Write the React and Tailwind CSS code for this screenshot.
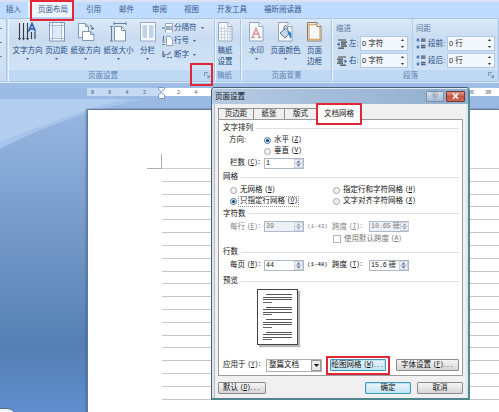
import React from 'react';

const menuTabs = [
  { label: '插入', cls: 'w-[28px] pl-[6px]' },
  { label: '页面布局', cls: 'w-[46px] pl-[10px]', active: true },
  { label: '引用', cls: 'w-[33px] pl-[12px]' },
  { label: '邮件', cls: 'w-[33px] pl-[12px]' },
  { label: '审阅', cls: 'w-[32px] pl-[12px]' },
  { label: '视图', cls: 'w-[33px] pl-[12px]' },
  { label: '开发工具', cls: 'w-[47px] pl-[12px]' },
  { label: '福昕阅读器', cls: 'w-[60px] pl-[12px]' },
];

/* ---------- Icons ---------- */

function TextDirectionIcon() {
  return (
    <svg width="19" height="20" viewBox="0 0 19 20" fill="none">
      <path d="M1.5 1v16M5.5 1v16M9.5 1v16M13.5 10v7M17 10v7" stroke="#3b3b3b" strokeWidth="1.1" />
      <path d="M0 16l1.5 2.5L3 16M4 16l1.5 2.5L7 16M8 16l1.5 2.5L11 16" fill="#3b3b3b" />
      <path d="M10.5 9.5L14 1.5l3.5 8M11.8 6.8h4.5" stroke="#2c62ad" strokeWidth="1.7" />
    </svg>
  );
}

function MarginsIcon() {
  return (
    <svg width="16" height="20" viewBox="0 0 16 20" fill="none">
      <rect x=".5" y=".5" width="15" height="18.5" fill="#f4f8fc" stroke="#7f96b5" />
      <path d="M3.5 1v18M12.5 1v18M1 3.5h14M1 16.5h14" stroke="#a9bcd4" />
      <rect x="4" y="4" width="8" height="12" fill="#dde9f6" />
    </svg>
  );
}

function OrientationIcon() {
  return (
    <svg width="18" height="20" viewBox="0 0 18 20" fill="none">
      <path d="M1.5 1.5h7l3 3v11h-10z" fill="#f1f6fb" stroke="#8398b4" />
      <path d="M5.5 9.5h8l3.5 3v6H5.5z" fill="#fbfdff" stroke="#8398b4" />
      <path d="M8.5 1.5v3h3M13.5 9.5v3h3.5" stroke="#8398b4" />
      <path d="M13 3.5c2 .3 2.5 1.5 2.4 3.5M13.8 6l1.6 1.5L17 6" stroke="#51647e" />
    </svg>
  );
}

function SizeIcon() {
  return (
    <svg width="17" height="20" viewBox="0 0 17 20" fill="none">
      <path d="M4.5 4.5h7l4 4v10.5h-11z" fill="#f8fbfe" stroke="#7f93ad" />
      <path d="M11.5 4.5v4h4" stroke="#7f93ad" />
      <path d="M4 1.5h12M1.5 4v15M4 0v3M16 0v3M0 4.5h3M0 19h3" stroke="#5e738e" strokeWidth=".9" />
    </svg>
  );
}

function ColumnsIcon() {
  return (
    <svg width="16" height="20" viewBox="0 0 16 20" fill="none">
      <rect x=".5" y=".5" width="15" height="18.5" fill="#f7fafd" stroke="#98abc5" />
      <rect x="2.5" y="3" width="4.5" height="13" fill="#c2d3e8" />
      <rect x="9" y="3" width="4.5" height="13" fill="#c2d3e8" />
    </svg>
  );
}

function SheetIcon({ stroke = '#93a5bd', children }) {
  return (
    <svg width="15" height="20" viewBox="0 0 15 20" fill="none">
      <path d="M.5.5H10l4 4V19H.5z" fill="#f5f9fd" stroke={stroke} />
      {children}
      <path d="M10 .5v4h4" fill="#fff" stroke={stroke} />
    </svg>
  );
}

function ManuscriptIcon() {
  return (
    <SheetIcon>
      <path d="M3.5 4v15M6.5 4v15M9.5 4v15M12 5v14M1 6.5h13M1 9.5h13M1 12.5h13M1 15.5h13" stroke="#c4ced9" strokeWidth=".8" />
    </SheetIcon>
  );
}

function WatermarkIcon() {
  return (
    <SheetIcon>
      <path d="M3.5 15L7 6.5l3.8 8.5M5 12h5" stroke="#d99a94" strokeWidth="1.5" />
      <path d="M2 15.5h4M9 15.5h3.5" stroke="#cf8f8a" />
    </SheetIcon>
  );
}

function PageColorIcon() {
  return (
    <SheetIcon>
      <path d="M2 11l6-5 4 5-5 5z" fill="#c8d8e8" stroke="#536b87" strokeWidth=".9" />
      <path d="M6 8c-1-5 3-6 4-1" stroke="#4c5f78" />
      <path d="M9 9.5c4-1 5 2 4 7-2-1-1.500-4-4-7z" fill="#2f7cc8" />
    </SheetIcon>
  );
}

function PageBorderIcon() {
  return (
    <SheetIcon stroke="#8b7b68">
      <path d="M2 2.500h8l3 3v12H2z" stroke="#dda96b" strokeWidth="1.3" />
    </SheetIcon>
  );
}

function BreakIcon() {
  return (
    <svg width="11" height="10" viewBox="0 0 11 10" fill="none">
      <path d="M3.5.5h7v3h-7zM3.500 9.500v-3h7v3" fill="#f8fbff" stroke="#8092aa" strokeWidth=".8" />
      <path d="M0 5h3M4 5h1.5M6.5 5H8M9 5h1.5" stroke="#4d627c" />
    </svg>
  );
}

function LineNumberIcon() {
  return (
    <svg width="11" height="10" viewBox="0 0 11 10" fill="none">
      <path d="M4.5.5H8L10.5 3v6.500h-6z" fill="#f8fbff" stroke="#8092aa" strokeWidth=".8" />
      <path d="M1.5 0v3M.5 4h2M.5 6h2M.5 8.5h2" stroke="#4d627c" />
    </svg>
  );
}

function HyphenIcon() {
  return (
    <svg width="11" height="10" viewBox="0 0 11 10" fill="none">
      <path d="M1 1v6M1 4.5c3-1.5 3 2.5 0 2.5M9 3c-2-1.5-3 .5-1.5 1.5M5 7.5h2" stroke="#4d5c70" />
      <path d="M4.5 4.5h2M8 7.5h2" stroke="#326bb1" />
    </svg>
  );
}

function IndentIcon({ flip }) {
  return (
    <svg width="10" height="10" viewBox="0 0 10 10" fill="none" className={flip ? '-scale-x-100' : ''}>
      <path d="M1 1h8M4 3.2h6M4 5.2h5M4 7.2h6M1 9.2h6" stroke="#444" strokeWidth="1.2" />
      <path d="M0 5.2l2.5-2v4z" fill="#2d5da5" />
    </svg>
  );
}

function SpacingIcon() {
  return (
    <svg width="10" height="11" viewBox="0 0 10 11" fill="none">
      <path d="M5 1.2h4.5M5 3h4.5M5 7.5h4.5M5 9.5h4.5" stroke="#555f6d" strokeWidth="1.3" />
      <path d="M2 1v3M2 7v3" stroke="#3d6fb5" />
      <path d="M0 2.5L2 0l2 2.5zM0 8.5L2 11l2-2.5z" fill="#3d6fb5" />
    </svg>
  );
}

function Launcher() {
  return (
    <svg width="6" height="6" viewBox="0 0 6 6" fill="none">
      <path d="M.5 4V.5H4M2.5 2.5l2.5 2.5M5.5 3v2.5H3" stroke="#6683ab" strokeWidth=".8" />
    </svg>
  );
}

function Caret() {
  return (
    <svg width="3" height="2" viewBox="0 0 3 2">
      <path d="M0 0h3L1.5 2z" fill="#44618f" />
    </svg>
  );
}

/* ---------- Ribbon ---------- */

function BigButton({ icon, label, second, width }) {
  return (
    <div className={`flex flex-col items-center ${width}`}>
      <div className="h-[21px] flex items-start">{icon}</div>
      <span className="h-[11px] leading-[11px] mt-[2px] whitespace-nowrap">{label}</span>
      {second ? <span className="h-[11px] leading-[11px]">{second}</span> : <span className="pt-[2px]"><Caret /></span>}
    </div>
  );
}

function SmallButton({ icon, label }) {
  return (
    <div className="flex items-center h-[13.5px]">
      {icon}
      <span className="ml-px mr-[4px]">{label}</span>
      <Caret />
    </div>
  );
}

function Group({ title, width, titleClass = '', launcher, children }) {
  return (
    <div className={`flex flex-col shrink-0 h-[64px] rounded-[2px] border border-[#a9c5e6] border-l-[#edf5fd] bg-linear-to-b from-[#dce9f7] from-0% via-[#c9dcf0] via-30% to-[#d3e6f9] overflow-hidden ${width}`}>
      <div className="flex h-[51px] text-[#244a85]">{children}</div>
      <div className="relative flex-1 bg-[#bfd8f3] text-[#5e80b2] flex items-center justify-center">
        <span className={titleClass}>{title}</span>
        {launcher && <span className="absolute right-[4px] top-[2px]"><Launcher /></span>}
      </div>
    </div>
  );
}

function RibbonField({ icon, label, value, labelWidth }) {
  return (
    <div className="flex items-center h-[17px]">
      {icon}
      <span className={`pl-[2px] whitespace-nowrap ${labelWidth}`}>{label}</span>
      <div className="flex items-center justify-between w-[48px] h-[15px] border border-[#b3cae6] bg-[#f3f8fd] text-[#222] pl-px pr-[3px]">
        <span>{value}</span>
        <svg width="3" height="9" viewBox="0 0 3 9">
          <path d="M0 2L1.5 0 3 2zM0 7l1.5 2L3 7z" fill="#333" />
        </svg>
      </div>
    </div>
  );
}

function Ribbon() {
  return (
    <div className="flex h-[66px] shrink-0 pt-px bg-[#c5dbf5] border-b border-[#d5edfb]">
      <div className="w-[7px] h-[64px] shrink-0 rounded-r-[2px] border border-l-0 border-[#a9c5e6] bg-linear-to-b from-[#dce9f7] to-[#c9dcf0] flex flex-col pt-[9px] gap-[13px]">
        <span className="w-[2px] h-px bg-[#66809f]" />
        <span className="w-[2px] h-px bg-[#66809f]" />
        <span className="w-[2px] h-px bg-[#66809f]" />
      </div>
      <Group title="页面设置" width="w-[207px] ml-px" titleClass="-ml-[17px]" launcher>
        <div className="flex pt-[3px] pl-[2px]">
          <BigButton icon={<TextDirectionIcon />} label="文字方向" width="w-[33px]" />
          <BigButton icon={<MarginsIcon />} label="页边距" width="w-[25px]" />
          <BigButton icon={<OrientationIcon />} label="纸张方向" width="w-[33px]" />
          <BigButton icon={<SizeIcon />} label="纸张大小" width="w-[33px]" />
          <BigButton icon={<ColumnsIcon />} label="分栏" width="w-[25px]" />
        </div>
        <div className="flex flex-col pt-[2px] pl-[2px]">
          <SmallButton icon={<BreakIcon />} label="分隔符" />
          <SmallButton icon={<LineNumberIcon />} label="行号" />
          <SmallButton icon={<HyphenIcon />} label="断字" />
        </div>
      </Group>
      <Group title="稿纸" width="w-[26px]" titleClass="-ml-[7px]">
        <div className="pt-[3px]">
          <BigButton icon={<ManuscriptIcon />} label="稿纸" second="设置" width="w-[18px]" />
        </div>
      </Group>
      <Group title="页面背景" width="w-[91px]">
        <div className="flex pt-[3px] pl-[4px]">
          <BigButton icon={<WatermarkIcon />} label="水印" width="w-[21px]" />
          <BigButton icon={<PageColorIcon />} label="页面颜色" width="w-[37px]" />
          <BigButton icon={<PageBorderIcon />} label="页面" second="边框" width="w-[21px]" />
        </div>
      </Group>
      <Group title="段落" width="w-[167px]" titleClass="-ml-[10px]" launcher>
        <div className="flex flex-col w-[79px] pl-[3px] pt-[4px]">
          <span className="h-[12px] leading-[11px] text-[#56749f]">缩进</span>
          <div className="flex flex-col pl-px">
            <RibbonField icon={<IndentIcon />} label="左:" value="0 字符" labelWidth="w-[13px]" />
            <RibbonField icon={<IndentIcon flip />} label="右:" value="0 字符" labelWidth="w-[13px]" />
          </div>
        </div>
        <div className="flex flex-col pl-[3px] pt-[4px] border-l border-[#b4cde9]">
          <span className="h-[12px] leading-[11px] text-[#56749f]">间距</span>
          <div className="flex flex-col">
            <RibbonField icon={<SpacingIcon />} label="段前:" value="0 行" labelWidth="w-[21px]" />
            <RibbonField icon={<SpacingIcon />} label="段后:" value="0 行" labelWidth="w-[21px]" />
          </div>
        </div>
      </Group>
    </div>
  );
}

/* ---------- Document ---------- */

function Ruler() {
  return (
    <div className="flex h-[8px] ml-[87px] text-[5.5px] leading-[8px] text-[#4d5b70]">
      <div className="flex w-[74px] bg-[#c5daf4]">
        {[8, 6, 4, 2].map((n) => (
          <span key={n} className="w-[17.3px] pl-[4px]">{n}</span>
        ))}
      </div>
      <div className="flex flex-1 justify-between bg-white pl-[9px] overflow-hidden">
        <div className="flex">
          <span className="w-[17.3px] pl-[7px]">2</span>
          <span className="w-[17.3px] pl-[7px]">4</span>
        </div>
        <div className="flex">
          <span className="w-[17.3px]">36</span>
          <span className="w-[14px]">38</span>
        </div>
      </div>
    </div>
  );
}

function Document() {
  return (
    <div className="relative flex-1 overflow-hidden bg-linear-to-b from-[#9fbde6] from-0% via-[#557fb3] via-80% to-[#608ecd]">
      <svg className="absolute left-0 top-[16px]" width="150" height="50" viewBox="0 0 150 50">
        <path d="M0 0h146C90 10 40 29 0 50z" fill="#a6c3e9" />
        <path d="M0 0h125C75 13 35 29 0 43z" fill="#b3cdee" />
      </svg>
      <div className="relative pt-[5px]">
        <Ruler />
        <svg className="absolute left-[158px] top-[4px]" width="7" height="12" viewBox="0 0 7 12">
          <path d="M.5.5h6v2l-3 2.5-3-2.5zM.5 11.5h6V8l-3-2.5-3 2.5z" fill="#eef5fc" stroke="#7489a5" strokeWidth=".8" />
        </svg>
      </div>
      <div className="relative mt-[13px] ml-[87px] h-[320px] bg-white border-l border-t border-[#63799b] shadow-[-1px_0_2px_rgba(40,60,100,0.4)]">
        <div className="flex pt-[44px] pl-[59px]">
          <div className="w-[15px] h-[15px] border-r border-b border-[#adadad]" />
        </div>
        <div className="-mt-[14px] pl-[74px] pt-[13px]">
          <div className="border-t border-[#ccced2]">
            {Array.from({ length: 18 }, (_, i) => (
              <div key={i} className="h-[12.82px] border-b border-[#c4c6cb]" />
            ))}
          </div>
        </div>
      </div>
      <div className="absolute -left-[4px] top-[325px] w-[21px] h-[20px] rounded-tr-[10px] border border-[#536d91] bg-[#f5f7fa]" />
    </div>
  );
}

/* ---------- Dialog ---------- */

function Key({ k, colon }) {
  return (
    <span className="font-['Liberation_Mono',monospace] text-[6.4px] ml-[2px] tracking-[-0.4px]">
      (<span className="underline">{k}</span>){colon && ':'}
    </span>
  );
}

function Section({ label, height }) {
  return (
    <div className={`flex items-center pl-[4px] pr-[3px] ${height}`}>
      <span>{label}</span>
      <span className="flex-1 h-px bg-[#dfdfdf] ml-[3px]" />
    </div>
  );
}

function Radio({ checked, focus, children }) {
  return (
    <div className="flex items-center">
      <span className={`w-[7px] h-[7px] rounded-full border flex items-center justify-center mr-[2px] ${checked ? 'border-[#49779f] bg-[#d7edfa]' : 'border-[#a5a5a5] bg-[#f1f1f1]'}`}>
        {checked && <span className="w-[3px] h-[3px] rounded-full bg-[#123f66]" />}
      </span>
      <span className={`flex items-center whitespace-nowrap h-[9px] px-px ${focus ? 'outline outline-dotted outline-[#999]' : ''}`}>{children}</span>
    </div>
  );
}

function Spin({ value, disabled, unit }) {
  return (
    <div className={`flex items-center justify-between w-[40px] h-[11px] border pl-px whitespace-nowrap ${disabled ? 'border-[#adb9ca] bg-[#edf0f5] text-[#777]' : 'border-[#aeb9c8] bg-white text-[#111]'}`}>
      <span className="flex items-center font-['Liberation_Mono','Noto_Sans_CJK_SC',monospace] text-[6.6px] leading-[9px]">
        {value}
        {unit && <span className="ml-[2px] text-[7px]">{unit}</span>}
      </span>
      <span className="w-[9px] h-[9px] shrink-0 flex flex-col items-center justify-center border border-[#cdd3dc] bg-[#eef1f5]">
        <svg width="7" height="7" viewBox="0 0 7 7">
          <path d="M1.5 2.5l2-2 2 2zM1.5 4.5l2 2 2-2z" fill={disabled ? '#8d98ad' : '#4a5c92'} />
          <path d="M0 3.5h7" stroke="#a9b2c5" strokeWidth=".7" />
        </svg>
      </span>
    </div>
  );
}

function SpinRow({ label, k, value, range, k2, value2, disabled, height }) {
  return (
    <div className={`flex items-center pl-[11px] ${height} ${disabled ? 'text-[#858585]' : ''}`}>
      <span className="w-[34px] shrink-0 flex items-center whitespace-nowrap">{label}<Key k={k} colon /></span>
      <Spin value={value} disabled={disabled} />
      <span className="w-[28px] pl-[3px] shrink-0 font-['Liberation_Mono',monospace] text-[6.2px] tracking-[-0.3px]">{range}</span>
      <span className="w-[37px] shrink-0 flex items-center whitespace-nowrap">跨度<Key k={k2} colon /></span>
      <Spin value={value2} disabled={disabled} unit="磅" />
    </div>
  );
}

function PreviewPage() {
  return (
    <div className="ml-[38px] w-[41px] h-[56px] bg-white border border-[#444] shadow-[2px_2px_1px_#b5b5b5] pt-[4px] pl-[5px] flex flex-col gap-[4px]">
      {[0, 1, 2, 3].map((n) => (
        <div key={n} className="flex flex-col gap-[1.5px]">
          <span className="ml-[3px] w-[26px] h-px bg-[#555]" />
          <span className="w-[29px] h-px bg-[#555]" />
          <span className="w-[29px] h-px bg-[#555]" />
          <span className="w-[9px] h-px bg-[#666]" />
        </div>
      ))}
    </div>
  );
}

function Button({ width, primary, children }) {
  return (
    <div className={`flex items-center justify-center h-[12px] rounded-[1px] border whitespace-nowrap ${width} ${primary ? 'border-[#4796b8] bg-linear-to-b from-[#eaf6fb] to-[#c4e5f4] shadow-[inset_0_0_0_1px_#b5e6fa]' : 'border-[#8c8c8c] bg-linear-to-b from-[#f4f4f4] to-[#d6d6d6]'}`}>
      {children}
    </div>
  );
}

function Dots() {
  return <span className="tracking-[1.5px]">...</span>;
}

function PageSetupDialog() {
  return (
    <div className="absolute left-[211px] top-[87px] w-[259px] h-[313px] flex flex-col rounded-t-[4px] border border-[#4b5f73] border-r-2 border-r-[#548a91] border-b-2 border-b-[#4f858c] bg-[#dfe6ee] text-[#111] overflow-hidden">
      <div className="flex items-center h-[16px] shrink-0 pl-[3px] pr-[3px] bg-linear-to-r from-[#b7cbe2] via-[#a2bbd8] to-[#91aece] shadow-[inset_0_1px_0_#dce9f5]">
        <span className="flex-1 pt-px">页面设置</span>
        <span className="w-[18px] h-[11px] rounded-[1px] border border-[#7990ad] bg-linear-to-b from-[#d5e1ee] to-[#a5bbd4] flex items-center justify-center text-[8px] leading-none font-bold text-white [text-shadow:0_0_2px_#223,0_0_1px_#223]">?</span>
        <span className="w-[19px] h-[11px] ml-[2px] rounded-[1px] border border-[#7c3430] bg-linear-to-b from-[#dd9a8c] via-[#c65342] to-[#cc6a55] flex items-center justify-center">
          <svg width="7" height="6" viewBox="0 0 7 6"><path d="M1 .5l5 5M6 .5l-5 5" stroke="#fff" strokeWidth="1.6" /></svg>
        </span>
      </div>
      <div className="flex-1 flex flex-col bg-[#f0f0f0] ml-[2px] mr-[2px] border-l border-[#b5bcc4] px-[3px]">
        <div className="flex items-end h-[15px] shrink-0">
          <div className="flex items-center justify-center w-[36px] h-[11px] bg-[#f0f0f0] border border-b-0 border-[#8f8f8f]">页边距</div>
          <div className="flex items-center justify-center w-[31px] h-[11px] bg-[#f0f0f0] border border-b-0 border-l-0 border-[#8f8f8f]">纸张</div>
          <div className="flex items-center justify-center w-[31px] h-[11px] bg-[#f0f0f0] border-t border-[#8f8f8f]">版式</div>
          <div className="relative z-10 flex items-center justify-center w-[46px] h-[22px] -mb-[6px] bg-white border-2 border-[#e32636] shrink-0">文档网格</div>
        </div>
        <div className="flex flex-col h-[257px] shrink-0 bg-white border border-[#9b9b9b] pt-[2px]">
          <Section label="文字排列" height="h-[12px]" />
          <div className="flex items-center h-[12px] pl-[10px]">
            <span className="w-[35px]">方向:</span>
            <Radio checked>水平<Key k="Z" /></Radio>
          </div>
          <div className="flex items-center h-[10px] pl-[45px]">
            <Radio>垂直<Key k="V" /></Radio>
          </div>
          <div className="flex items-center h-[14px] pl-[11px]">
            <span className="w-[34px] flex items-center whitespace-nowrap">栏数<Key k="C" colon /></span>
            <Spin value="1" />
          </div>
          <Section label="网格" height="h-[14px]" />
          <div className="flex items-center h-[12px] pl-[11px]">
            <div className="w-[103px]"><Radio>无网格<Key k="N" /></Radio></div>
            <Radio>指定行和字符网格<Key k="H" /></Radio>
          </div>
          <div className="flex items-center h-[10px] pl-[11px]">
            <div className="w-[103px]"><Radio checked focus>只指定行网格<Key k="O" /></Radio></div>
            <Radio>文字对齐字符网格<Key k="X" /></Radio>
          </div>
          <Section label="字符数" height="h-[15px]" />
          <SpinRow label="每行" k="E" value="39" range="(1-43)" k2="I" value2="10.65" disabled height="h-[11px]" />
          <div className="flex items-center h-[13px] pl-[114px] text-[#777]">
            <span className="w-[8px] h-[8px] border border-[#b5b5b5] bg-white mr-[3px]" />
            使用默认跨度<Key k="A" />
          </div>
          <Section label="行数" height="h-[14px]" />
          <SpinRow label="每页" k="R" value="44" range="(1-48)" k2="T" value2="15.6" height="h-[12px]" />
          <Section label="预览" height="h-[18px] pt-[2px]" />
          <PreviewPage />
          <div className="flex items-center h-[20px] mt-[10px] pl-[4px]">
            <span className="w-[43px] flex items-center whitespace-nowrap">应用于<Key k="Y" colon /></span>
            <div className="flex items-center justify-between w-[56px] h-[13px] border border-[#b0b0b0] pl-[2px]">
              整篇文档
              <span className="w-[10px] h-[11px] border border-[#999] bg-[#e9e9e9] flex items-center justify-center">
                <svg width="5" height="3" viewBox="0 0 5 3"><path d="M0 0h5L2.5 3z" fill="#111" /></svg>
              </span>
            </div>
            <div className="ml-[4px] w-[64px] h-[19px] shrink-0 border-2 border-[#e32636] p-[2px] flex items-center">
              <Button width="w-full" primary>绘图网格<Key k="W" /><Dots /></Button>
            </div>
            <div className="ml-[6px] shrink-0">
              <Button width="w-[63px]">字体设置<Key k="F" /><Dots /></Button>
            </div>
          </div>
        </div>
        <div className="flex items-center pt-[6px]">
          <Button width="w-[48px]">默认<Key k="D" /><Dots /></Button>
          <span className="flex-1" />
          <Button width="w-[46px]" primary>确定</Button>
          <span className="w-[6px]" />
          <Button width="w-[46px]">取消</Button>
        </div>
      </div>
    </div>
  );
}

export default function App() {
  return (
    <div className="relative flex flex-col w-[499px] h-[412px] overflow-hidden bg-white font-['Liberation_Sans','Noto_Sans_CJK_SC',sans-serif] text-[7.5px] leading-[10px]">
      <div className="flex h-[17px] shrink-0 border-t-2 border-[#d9e2ee] bg-[#bfdbff] text-[#35578f]">
        {menuTabs.map((tab) => (
          <div key={tab.label} className={`flex items-center shrink-0 whitespace-nowrap pt-px ${tab.cls} ${tab.active ? 'bg-[#edf4fc]' : ''}`}>
            {tab.label}
          </div>
        ))}
      </div>
      <Ribbon />
      <Document />
      <PageSetupDialog />
      {/* callouts */}
      <div className="absolute left-[30px] top-0 w-[44px] h-[21px] border-2 border-[#e32636]" />
      <div className="absolute left-[190px] top-[63px] w-[23px] h-[23px] border-2 border-[#e32636]" />
    </div>
  );
}
